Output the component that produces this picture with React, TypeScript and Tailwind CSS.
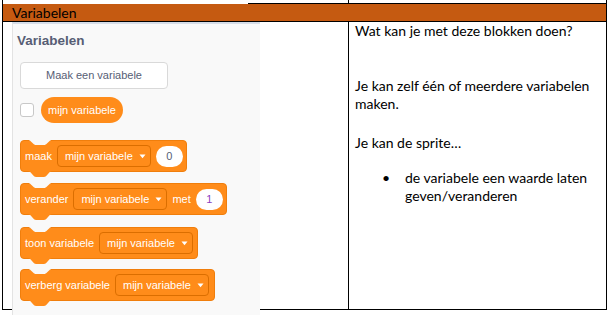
import React from "react";

const NOTCH = "M0,0 c2,0 3,1 4,2 l4,4 c1,1 2,2 4,2 h12 c2,0 3,-1 4,-2 l4,-4 c1,-1 2,-2 4,-2 Z";

function Caret() {
  return (
    <svg width="7" height="5" viewBox="0 0 7 5" className="ml-[6px]">
      <path d="M0.5,0.5 L6.5,0.5 L3.5,4.2 Z" fill="#ffffff" />
    </svg>
  );
}

function Dropdown({ w }: { w: number }) {
  return (
    <div
      className="h-[22px] rounded-[4px] border border-[#db6e00] bg-[#ff8c1a] flex items-center pl-[7px] text-white"
      style={{ width: w }}
    >
      <span>mijn variabele</span>
      <Caret />
    </div>
  );
}

function Oval({ v, color }: { v: string; color: string }) {
  return (
    <div
      className="h-[21px] w-[27px] rounded-full bg-white flex items-center justify-center"
      style={{ color }}
    >
      {v}
    </div>
  );
}

function Block({ w, children, mt }: { w: number; children: React.ReactNode; mt: number }) {
  return (
    <div className="relative" style={{ width: w, marginTop: mt }}>
      <div className="h-[32px] rounded-[4px] bg-[#ff8c1a] border border-[#f07e0c] flex items-center pl-[4px] gap-[5px] text-white">
        {children}
      </div>
      <svg
        className="absolute left-[8px] top-0"
        width="24"
        height="5"
        viewBox="0 0 36 8"
        preserveAspectRatio="none"
      >
        <path d={NOTCH} fill="#f9f9f9" />
      </svg>
      <svg
        className="absolute left-[8px] top-[31px]"
        width="24"
        height="6"
        viewBox="0 0 36 8"
        preserveAspectRatio="none"
      >
        <path d={NOTCH} fill="#ff8c1a" />
      </svg>
    </div>
  );
}

function Palette() {
  return (
    <div
      className="relative z-10 w-[248px] h-[293px] bg-[#f9f9f9] border-l border-[#e3e3e3] border-t-2 border-t-[#d6dde8] flex flex-col pl-[7px] text-[11px] text-[#575e75]"
      style={{ fontFamily: '"Liberation Sans", Arial, sans-serif' }}
    >
      <div className="mt-[9px] ml-[-3px] h-[16px] leading-[16px] text-[13.5px] font-bold text-[#575e75]">
        Variabelen
      </div>
      <div className="mt-[13px] w-[148px] h-[27px] rounded-[4px] bg-white border border-[#d9d9d9] flex items-center justify-center">
        Maak een variabele
      </div>
      <div className="mt-[8px] flex items-center h-[26px]">
        <div className="w-[14px] h-[14px] rounded-[3px] bg-white border border-[#c8c8c8]" />
        <div className="ml-[7px] h-[26px] w-[82px] rounded-full bg-[#ff8c1a] text-white flex items-center justify-center">
          mijn variabele
        </div>
      </div>
      <Block w={167} mt={17}>
        <span>maak</span>
        <Dropdown w={94} />
        <Oval v="0" color="#575e75" />
      </Block>
      <Block w={207} mt={11}>
        <span>verander</span>
        <Dropdown w={94} />
        <span>met</span>
        <Oval v="1" color="#8b3fbf" />
      </Block>
      <Block w={178} mt={12}>
        <span>toon variabele</span>
        <Dropdown w={94} />
      </Block>
      <Block w={195} mt={10}>
        <span>verberg variabele</span>
        <Dropdown w={94} />
      </Block>
    </div>
  );
}

export default function App() {
  return (
    <div
      className="w-[610px] h-[315px] bg-white overflow-hidden relative text-black"
      style={{ fontFamily: 'Lato, "Open Sans", sans-serif' }}
    >
      <div className="ml-[2px] w-[605px]">
        <div className="h-[4px] flex">
          <div className="w-[246px] h-full border-l border-black" />
          <div className="flex-1 h-full border-b border-r border-black flex">
            <div className="w-[101px] h-full border-r border-black" />
          </div>
        </div>
        <div className="h-[18px] bg-[#c55a11] border-l border-r border-b border-black pl-[9px] text-[14px] leading-[17px]">
          Variabelen
        </div>
        <div className="h-[288px] flex border-l border-r border-b border-black">
          <div className="w-[346px] h-full border-r border-black pl-[9px] relative">
            <Palette />
            <div className="absolute left-[7px] top-[173px] text-[9px] leading-[9px] text-[#555]">⋮</div>
          </div>
          <div className="flex-1 pl-[6px] text-[14px] leading-[18px]">
            <div className="h-[18px]">Wat kan je met deze blokken doen?</div>
            <div className="mt-[37px]">Je kan zelf één of meerdere variabelen</div>
            <div>maken.</div>
            <div className="mt-[21px]">Je kan de sprite…</div>
            <div className="mt-[17px] flex">
              <div className="w-[50px] pl-[27px]">•</div>
              <div className="w-[190px]">de variabele een waarde laten geven/veranderen</div>
            </div>
          </div>
        </div>
      </div>
    </div>
  );
}
